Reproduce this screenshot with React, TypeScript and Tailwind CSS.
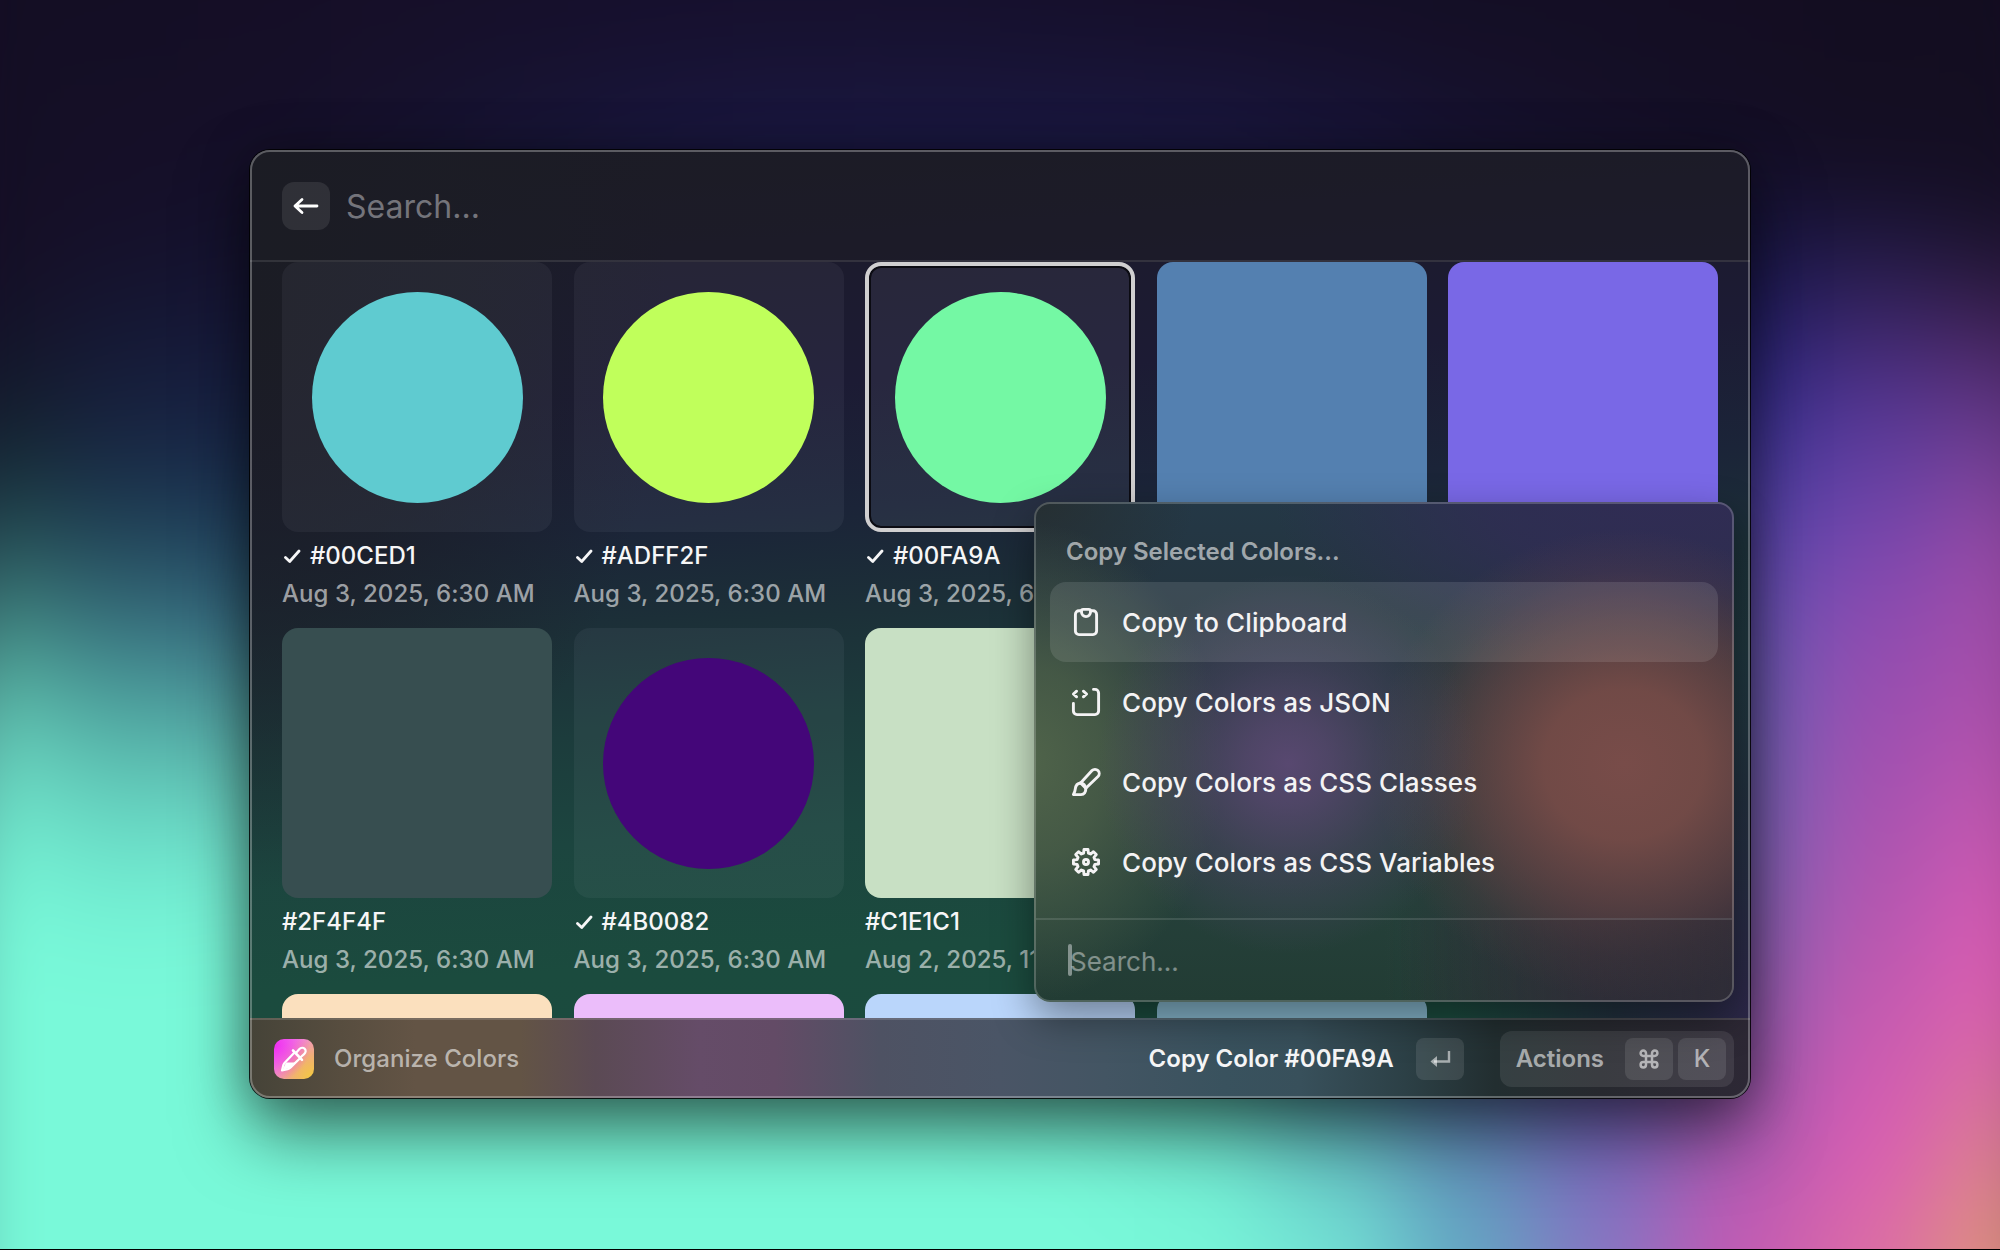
import React from "react";

type Ramp = [number, string][];

/* Vertical colour ramps that blur together into the wallpaper. Each stop is [page y, colour]. */
const mint = "#79f9d9";
const mid: Ramp = [[0, "#16102c"], [150, "#1a1842"], [375, "#1b1b4a"], [575, "#1c3454"], [750, "#348074"], [1000, "#74f0d2"], [1120, mint]];
const ramps: Ramp[] = [
  [[0, "#140e24"], [265, "#150f26"], [345, "#14142a"], [425, "#14202e"], [495, "#1a3842"], [580, "#33686a"], [640, "#46938a"], [705, "#5cbcaa"], [765, "#69d4c0"], [828, "#70e8cc"], [890, "#76f4d6"], [950, mint]],
  [[0, "#140e24"], [240, "#15102a"], [360, "#151b38"], [450, "#192744"], [515, "#1c3c52"], [578, "#2c5868"], [636, "#3b7784"], [702, "#4ca09c"], [762, "#5cbeb0"], [824, "#68d8c4"], [890, "#72ecd1"], [960, mint]],
  [[0, "#150e26"], [200, "#15102a"], [350, "#171a3e"], [460, "#192a4c"], [570, "#264e6a"], [640, "#3c7488"], [760, "#60bcb2"], [860, "#74ead2"], [950, mint]],
  [[0, "#160f28"], [150, "#16122e"], [375, "#181740"], [575, "#1c3454"], [750, "#348074"], [950, mint]],
  [[0, "#160f2a"], [150, "#171536"], [375, "#191a48"], [575, "#1c3454"], [750, "#348074"], [980, mint]],
  [[0, "#160f2c"], [150, "#19173e"], [375, "#1b1b4a"], [575, "#1c3454"], [750, "#348074"], [1000, mint]],
  mid,
  mid,
  [[0, "#150f2a"], [150, "#1a1842"], [375, "#1b1b4a"], [575, "#1c3454"], [750, "#348074"], [1050, "#70e8d0"], [1170, mint]],
  [[0, "#150e28"], [150, "#1a1840"], [375, "#1b1b4a"], [575, "#1c3454"], [770, "#348074"], [1080, "#68dcc8"], [1220, "#78f6d8"]],
  [[0, "#140e26"], [150, "#18153a"], [375, "#1a1844"], [625, "#283070"], [875, "#3c5080"], [1100, "#5cb0b8"], [1250, "#74e4d6"]],
  [[0, "#140e24"], [150, "#161230"], [375, "#19173e"], [625, "#3c3694"], [875, "#4c50a0"], [1100, "#5c80b0"], [1250, "#64a8c4"]],
  [[0, "#140e24"], [150, "#151028"], [300, "#1b1a4e"], [450, "#2c2870"], [625, "#3c3694"], [875, "#5450a8"], [1100, "#6c60b4"], [1250, "#8878c4"]],
  [[0, "#140d22"], [170, "#140f26"], [270, "#1a1850"], [378, "#2a2680"], [440, "#3c3494"], [505, "#4c40a4"], [570, "#5c4cb0"], [700, "#6a60b6"], [824, "#7464b6"], [950, "#8460b2"], [1100, "#a058b0"], [1250, "#c45ab4"]],
  [[0, "#130d20"], [190, "#140e24"], [250, "#211a48"], [314, "#382460"], [378, "#4c3088"], [440, "#5c3c9c"], [505, "#6c44a8"], [570, "#8048b0"], [630, "#8e4cb0"], [760, "#a050b0"], [890, "#b056b0"], [1015, "#c45ab0"], [1140, "#da5cb4"], [1190, "#da62b0"], [1250, "#dc6ea4"]],
  [[0, "#130d20"], [210, "#150f24"], [260, "#221838"], [314, "#3c2050"], [378, "#582f78"], [440, "#6c3e90"], [505, "#8a46a0"], [570, "#9c4ca8"], [700, "#ac50ac"], [824, "#c458b0"], [950, "#dc5cb4"], [1015, "#dc62ae"], [1100, "#da749c"], [1250, "#de947c"]],
];
const OVERSCAN = 125;
const toGradient = (r: Ramp) => `linear-gradient(180deg,${r.map(([y, c]) => `${c} ${y + OVERSCAN}px`).join(",")})`;

type Swatch = { hex: string; color: string; date: string; circle?: boolean; checked?: boolean; active?: boolean };

const AUG3 = "Aug 3, 2025, 6:30 AM";
const swatches: Swatch[] = [
  { hex: "#00CED1", color: "#5fcbd0", date: AUG3, circle: true, checked: true },
  { hex: "#ADFF2F", color: "#c0ff5b", date: AUG3, circle: true, checked: true },
  { hex: "#00FA9A", color: "#74f8a4", date: AUG3, circle: true, checked: true, active: true },
  { hex: "", color: "#5480b0", date: "" },
  { hex: "", color: "#7968e6", date: "" },
  { hex: "#2F4F4F", color: "#374e50", date: AUG3 },
  { hex: "#4B0082", color: "#440679", date: AUG3, circle: true, checked: true },
  { hex: "#C1E1C1", color: "#c8e0c4", date: "Aug 2, 2025, 11" },
];
const peeking = ["#fbe0be", "#ebbdfa", "#bad6fb", "#84b4ca"];

function Check() {
  return (
    <svg width="18" height="16" viewBox="0 0 18 16" fill="none" stroke="currentColor" strokeWidth="2.8" strokeLinecap="round" strokeLinejoin="round">
      <path d="M1.500 9.500 5.700 13.500 15 3" />
    </svg>
  );
}

function Card({ s }: { s: Swatch }) {
  return (
    <div className="flex h-[366px] w-[270px] flex-col">
      {s.circle ? (
        <div
          className={
            "flex h-[270px] shrink-0 items-center justify-center rounded-2xl " +
            (s.active ? "border-4 border-[#d0cfd0] bg-[#f0f4ff]/6 shadow-[inset_0_0_0_2px_#0b0b12]" : "bg-[#f0f4ff]/5")
          }
        >
          <div className="size-[211px] shrink-0 rounded-full" style={{ background: s.color }} />
        </div>
      ) : (
        <div className="h-[270px] shrink-0 rounded-2xl" style={{ background: s.color }} />
      )}
      {s.hex && (
        <div className="flex flex-col pt-[5px] whitespace-nowrap">
          <div className="flex h-[38px] items-center gap-[8px] text-[24px] font-medium text-[#f6f6f7]">
            {s.checked && (
              <span className="pl-[2px]">
                <Check />
              </span>
            )}
            {s.hex}
          </div>
          <div className="flex h-[38px] items-center text-[24px] font-medium tracking-[0.05px] text-white/58">{s.date}</div>
        </div>
      )}
    </div>
  );
}

const iconProps = {
  width: 32,
  height: 32,
  viewBox: "0 0 32 32",
  fill: "none",
  stroke: "currentColor",
  strokeWidth: 2.9,
  strokeLinecap: "round" as const,
  strokeLinejoin: "round" as const,
};

const ClipboardIcon = () => (
  <svg {...iconProps}>
    <path d="M11.500 4.800H9a3.600 3.600 0 0 0-3.600 3.600V25A3.600 3.600 0 0 0 9 28.600h14a3.600 3.600 0 0 0 3.600-3.600V8.400A3.600 3.600 0 0 0 23 4.800h-2.500" />
    <path d="M13.200 3.400h5.600a1.700 1.700 0 0 1 1.700 1.700v1a4.500 4.500 0 0 1-9 0v-1a1.700 1.700 0 0 1 1.700-1.700Z" />
  </svg>
);
const JsonIcon = () => (
  <svg {...iconProps}>
    <path d="M3.400 17.500v7.500a3.600 3.600 0 0 0 3.600 3.600h18a3.600 3.600 0 0 0 3.600-3.600V7a3.600 3.600 0 0 0-3.600-3.600h-1.500" />
    <path d="M6.600 5.200 3.400 8l3.200 2.800M13.400 5.200 16.600 8l-3.200 2.800" />
  </svg>
);
const BrushIcon = () => (
  <svg {...iconProps}>
    <path d="M10.600 17 22 4.600a4.200 4.200 0 0 1 6 5.900L15.800 22.200" />
    <path d="M10.600 17c-3.300.4-4.900 2.400-5.300 5.800-.2 2.200-.8 4-1.900 5.800h7.600c3.200 0 5-2.400 4.800-6.400Z" />
    <path d="M10.600 17c2.800.5 4.600 2.200 5.200 5.200" />
  </svg>
);
const GearIcon = () => {
  const pts: string[] = [];
  for (let i = 0; i < 8; i++) {
    const at = (deg: number, r: number) => {
      const a = ((i * 45 + deg) * Math.PI) / 180;
      return `${(16 + r * Math.sin(a)).toFixed(2)} ${(16 - r * Math.cos(a)).toFixed(2)}`;
    };
    pts.push(at(-9, 12.7), at(9, 12.7), at(15, 9.2), at(30, 9.2));
  }
  return (
    <svg {...iconProps}>
      <path d={"M" + pts.join("L") + "Z"} />
      <circle cx="16" cy="16" r="2.500" />
    </svg>
  );
};

const actions = [
  { label: "Copy to Clipboard", icon: <ClipboardIcon />, active: true },
  { label: "Copy Colors as JSON", icon: <JsonIcon /> },
  { label: "Copy Colors as CSS Classes", icon: <BrushIcon /> },
  { label: "Copy Colors as CSS Variables", icon: <GearIcon /> },
];

function ActionMenu() {
  return (
    <div className="absolute top-[352px] left-[784px] flex h-[500px] w-[700px] flex-col overflow-hidden rounded-2xl border-2 border-white/20 bg-[radial-gradient(circle_190px_at_254px_262px,#584870_0%,#584870cc_22%,#58487066_55%,#58487000_100%),radial-gradient(ellipse_250px_235px_at_590px_262px,#784c49_0%,#744b47f4_32%,#6c484699_60%,#6c484633_82%,#6c484600_100%),radial-gradient(ellipse_200px_240px_at_-10px_260px,#50644a_0%,#4c6048cc_40%,#4c604800_100%),radial-gradient(ellipse_400px_170px_at_640px_0px,#302c54_0%,#302c54cc_45%,#302c5400_100%),radial-gradient(ellipse_340px_440px_at_700px_400px,#302c38_0%,#302c38dd_45%,#302c3800_100%),radial-gradient(ellipse_160px_120px_at_0%_0%,#262f32_0%,#262f3200_100%),linear-gradient(180deg,#243846_0%,#24343e_22%,#283c3c_60%,#25403a_80%,#223c34_100%)] bg-origin-border shadow-[0_16px_40px_rgba(0,0,0,0.4)]">
      <div className="flex flex-1 flex-col px-[14px] pt-[18px]">
        <div className="flex h-[60px] items-center px-4 text-[24px] font-semibold text-white/58">Copy Selected Colors...</div>
        {actions.map((a) => (
          <div
            key={a.label}
            className={
              "flex h-[80px] shrink-0 items-center gap-5 rounded-2xl px-5 text-[26px] font-medium tracking-[0.08px] text-[#f4f3f4] " +
              (a.active ? "bg-white/11" : "")
            }
          >
            {a.icon}
            <span>{a.label}</span>
          </div>
        ))}
      </div>
      <div className="flex h-[82px] shrink-0 items-center border-t-2 border-white/12 bg-[linear-gradient(90deg,#223c3400_50%,#2e2c3688_100%)] pl-8 text-[26px] text-white/42">
        <span className="h-8 w-1 rounded-sm bg-[#84928e]" />
        <span className="-ml-[2px] pt-[2px]">Search...</span>
      </div>
    </div>
  );
}

const CommandIcon = () => (
  <svg width="20" height="20" viewBox="0 0 20 20" fill="none" stroke="currentColor" strokeWidth="2.500">
    <path d="M7 7V4.300A2.700 2.700 0 1 0 4.300 7h11.400A2.700 2.700 0 1 0 13 4.300v11.400a2.700 2.700 0 1 0 2.700-2.700H4.300A2.700 2.700 0 1 0 7 15.700Z" />
  </svg>
);

function Footer() {
  return (
    <div className="flex h-[80px] shrink-0 items-center border-t-2 border-white/14 bg-[linear-gradient(90deg,#454338_0%,#574d3f_6%,#635445_11%,#635445_18%,#5b4a54_23%,#654c68_30%,#634b66_35%,#4e5263_42%,#4a5566_50%,#435563_57%,#39525e_65%,#38505b_70%,#2c4046_77%,#222e30_83%,#27292f_90%,#2d2835_100%)] pr-4 pl-6 text-[24px] font-medium">
      <div className="flex size-10 items-center justify-center rounded-[10px] bg-[radial-gradient(circle_at_0%_15%,#f02cf0_0%,#f040f0aa_35%,#f040f000_70%),radial-gradient(circle_at_100%_100%,#f4cc3c_0%,#f0b860cc_40%,#f0a09000_80%),linear-gradient(135deg,#f49af0,#f08ab0_100%)]">
        <svg width="28" height="28" viewBox="0 0 28 28" fill="none" stroke="#fff" strokeWidth="2.200" strokeLinecap="round" strokeLinejoin="round">
          <path d="M14.500 7.500 5.200 17.200c-.9.900-1.500 1.800-1.900 3L2 25.500l5.600-1.300c1.200-.3 2.100-.9 3-1.800L20 13.200" />
          <path d="M13 5.500 22 14.800" strokeWidth="2.600" />
          <path d="m16 8 3.200-3.700c1.700-2 4.100-2 5.500-.5s1.300 3.600-.6 5.300L20.300 12.500" />
          <path d="M6 17.500h9L9.500 23 2.500 25Z" fill="#fff" stroke="none" />
        </svg>
      </div>
      <span className="ml-5 tracking-[0.05px] text-white/58">Organize Colors</span>
      <span className="ml-auto font-semibold text-[#f6f6f7]">Copy Color #00FA9A</span>
      <div className="ml-[22px] flex h-[42px] w-12 items-center justify-center rounded-lg bg-white/10 text-white/55">
        <svg width="22" height="20" viewBox="0 0 22 20" fill="none" stroke="currentColor" strokeWidth="2.400">
          <path d="M20 2v10.500H5" />
          <path d="M8 7 1.500 12.500 8 18Z" fill="currentColor" stroke="none" />
        </svg>
      </div>
      <div className="ml-9 flex h-14 items-center rounded-xl bg-white/9 pr-2 pl-4 text-white/58">
        <span className="font-semibold">Actions</span>
        <span className="ml-[21px] flex h-[42px] w-12 items-center justify-center rounded-lg bg-white/10">
          <CommandIcon />
        </span>
        <span className="ml-[5px] flex h-[42px] w-12 items-center justify-center rounded-lg bg-white/10">K</span>
      </div>
    </div>
  );
}

export default function App() {
  return (
    <div className="relative isolate flex h-[1250px] w-[2000px] items-start justify-center overflow-hidden border-b border-black bg-[#140e24] pt-[150px] font-['Inter',sans-serif]">
      <div className="absolute -inset-x-[70px] -inset-y-[125px] -z-10 flex blur-[48px]">
        {ramps.map((r, i) => (
          <div key={i} className="flex-1" style={{ background: toGradient(r) }} />
        ))}
      </div>
      <div className="relative h-[948px] w-[1500px] rounded-[20px] bg-[#1c2130] shadow-[0_0_0_1px_rgba(0,0,0,0.85),0_36px_70px_rgba(0,0,0,0.5),0_0_50px_rgba(0,0,0,0.3)]">
        <div className="flex h-full flex-col overflow-hidden rounded-[20px] bg-[radial-gradient(ellipse_300px_460px_at_100%_90%,#2c2748_0%,#24223caa_45%,#24223c00_100%),radial-gradient(ellipse_420px_600px_at_0%_15%,#1b1c24_0%,#1b1e26aa_50%,#1c1e2600_100%),linear-gradient(176deg,#1d1c26_0%,#1c1b2c_12%,#1c1b34_26%,#1b2438_38%,#1c3038_48%,#1c3c3c_58%,#1c453f_68%,#1b4b3e_80%,#1b4a3e_100%)]">
          <header className="flex h-[112px] shrink-0 items-center border-b-2 border-white/10 bg-[#1c1c24]/50 pt-[2px] pl-8">
            <span className="flex size-12 items-center justify-center rounded-xl bg-white/9 text-white">
              <svg width="28" height="20" viewBox="0 0 28 20" fill="none" stroke="currentColor" strokeWidth="2.800" strokeLinecap="round" strokeLinejoin="round">
                <path d="M25 10H3M10 3.500 3 10l7 6.500" />
              </svg>
            </span>
            <span className="ml-4 pt-[2px] text-[32px] text-[#74747b]">Search...</span>
          </header>
          <main className="grid flex-1 auto-rows-[366px] grid-cols-5 content-start gap-x-[21.5px] overflow-hidden px-8">
            {swatches.map((s, i) => (
              <Card key={i} s={s} />
            ))}
            <div className="col-span-2" />
            {peeking.map((c) => (
              <div key={c} className="h-[270px] w-[270px] rounded-2xl" style={{ background: c }} />
            ))}
          </main>
          <Footer />
        </div>
        <div className="pointer-events-none absolute inset-0 rounded-[20px] border-2 border-white/28" />
        <ActionMenu />
      </div>
    </div>
  );
}
